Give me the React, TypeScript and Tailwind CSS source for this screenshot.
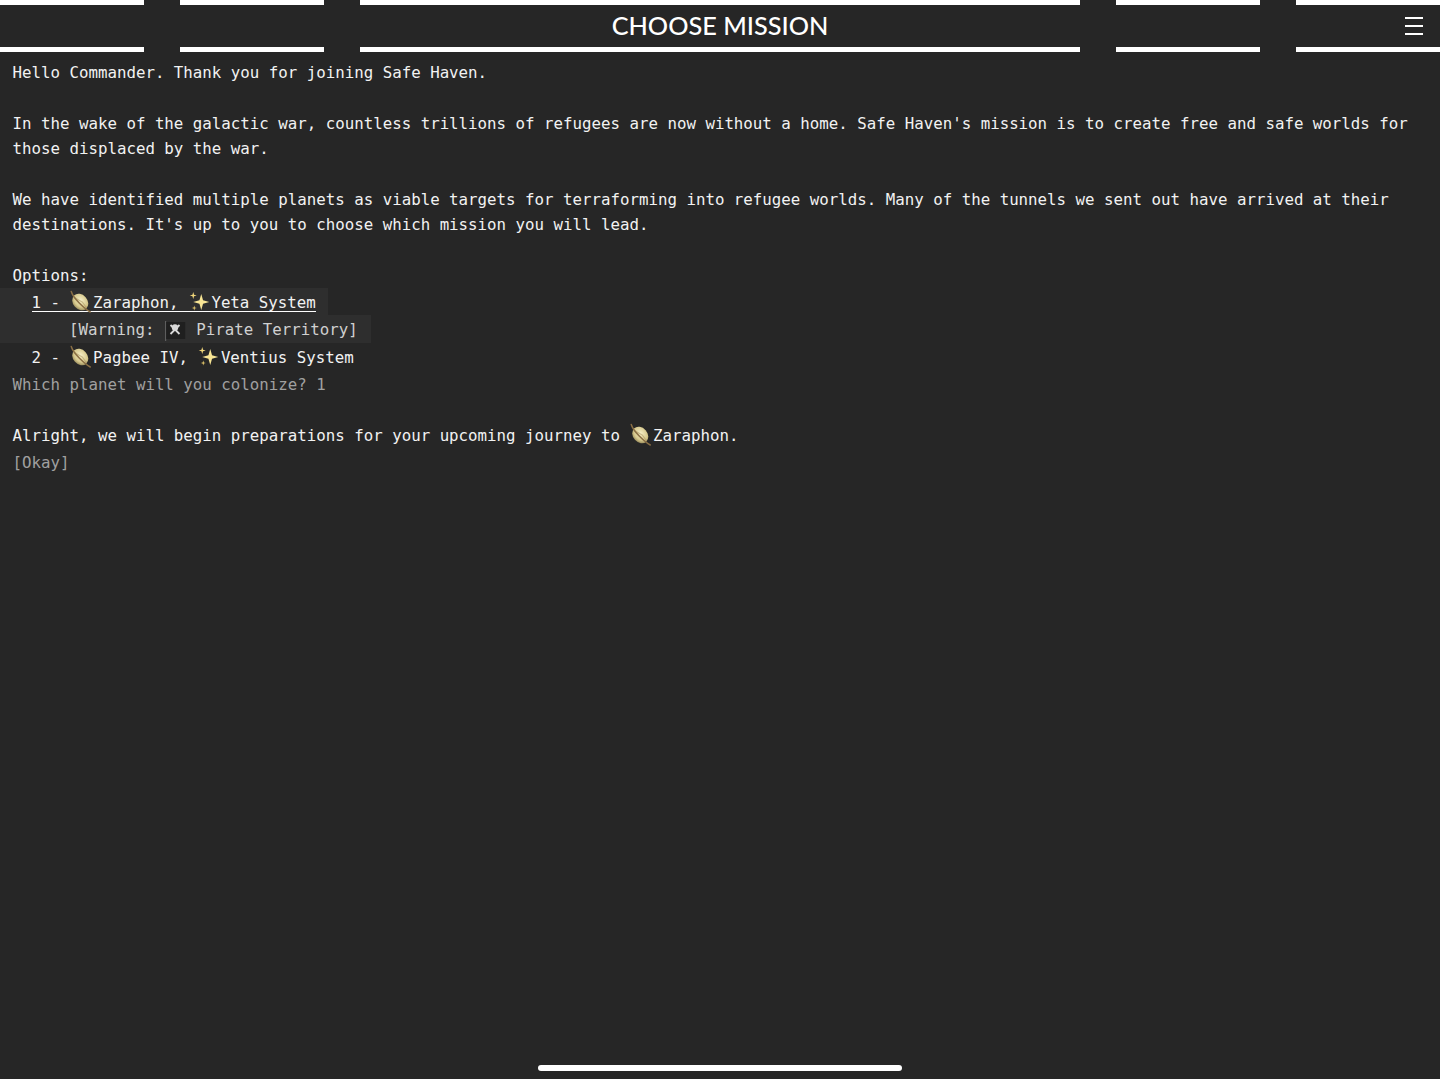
const barCell = "border-y-[5px] border-white h-[52px] flex items-center"

function Planet() {
  return (
    <svg viewBox="0 0 23 26" className="inline-block w-[23.5px] h-[26px] align-[-7px]">
      <defs>
        <radialGradient id="planetBody" cx="0.45" cy="0.4" r="0.7">
          <stop offset="0" stopColor="#f6efc8" />
          <stop offset="0.6" stopColor="#d6c88c" />
          <stop offset="1" stopColor="#7f7248" />
        </radialGradient>
      </defs>
      <ellipse cx="11" cy="13" rx="9" ry="7.2" transform="rotate(48 11 13)" fill="url(#planetBody)" />
      <path d="M5 8.5 L13 13 L17.5 19" stroke="#a8915c" strokeWidth="1.1" fill="none" opacity="0.55" />
      <path d="M2 2.5 C3 6 6 10 10 14 C14 18 17 21 21 23" stroke="#8a6f45" strokeWidth="1.5" fill="none" strokeLinecap="round" />
    </svg>
  )
}

function Sparkles() {
  return (
    <svg viewBox="0 0 23 26" className="inline-block w-[23.5px] h-[26px] align-[-7px]">
      <path d="M13 5 L14.8 11.2 L21 13 L14.8 14.8 L13 21 L11.2 14.8 L5 13 L11.2 11.2 Z" fill="#f8e594" />
      <path d="M5 3 L5.8 5.7 L8.5 6.5 L5.8 7.3 L5 10 L4.2 7.3 L1.5 6.5 L4.2 5.7 Z" fill="#f1d67a" />
      <path d="M6 16.5 L6.6 18.4 L8.5 19 L6.6 19.6 L6 21.5 L5.4 19.6 L3.5 19 L5.4 18.4 Z" fill="#e6c96c" />
    </svg>
  )
}

function PirateFlag() {
  return (
    <svg viewBox="0 0 22 26" className="inline-block w-[23px] h-[26px] align-[-7px]">
      <rect x="0.5" y="5" width="1.2" height="20" fill="#5e5e5e" />
      <rect x="1.7" y="6" width="19" height="17" fill="#1f1f1f" />
      <circle cx="10.5" cy="11.5" r="3.2" fill="#d8d8d8" />
      <path d="M6 9 L15 18 M15 9 L6 18" stroke="#d8d8d8" strokeWidth="1.8" />
    </svg>
  )
}

export default function App() {
  return (
    <div className="relative min-h-screen bg-[#262626] text-[#f2f2f2] font-['DejaVu_Sans_Mono',monospace] text-[15.77px]">
      {/* Header */}
      <header className="flex gap-9 h-[52px]">
        <div className={`${barCell} w-36`} />
        <div className={`${barCell} w-36`} />
        <div className={`${barCell} flex-1 justify-center`}>
          <h1 className="font-['Lato',sans-serif] text-[25.3px] font-medium text-white">CHOOSE MISSION</h1>
        </div>
        <div className={`${barCell} w-36`} />
        <div className={`${barCell} w-36 justify-end pr-[17px]`}>
          <div className="flex flex-col gap-[6px] w-[18px]">
            <span className="h-[2px] bg-white" />
            <span className="h-[2px] bg-white" />
            <span className="h-[2px] bg-white" />
          </div>
        </div>
      </header>

      {/* Terminal */}
      <main className="pt-[8px] whitespace-pre-wrap">
        <div className="pl-[12.5px] pr-3 leading-[25.4px]">
          <p>Hello Commander. Thank you for joining Safe Haven.</p>
          <p className="mt-[25.4px]">
            In the wake of the galactic war, countless trillions of refugees are now without a home. Safe Haven's mission is to create free and safe worlds for those displaced by the war.
          </p>
          <p className="mt-[25.4px]">
            We have identified multiple planets as viable targets for terraforming into refugee worlds. Many of the tunnels we sent out have arrived at their destinations. It's up to you to choose which mission you will lead.
          </p>
          <p className="mt-[25.4px]">Options:</p>
        </div>

        <div className="-mt-[0.6px] leading-[27px]">
          <div className="w-[328px] h-[27px] bg-[#2e2e2e] pl-[31.5px] pt-px">
            <span className="inline-block h-[23px] border-b border-white">{"1 - "}<Planet />{"Zaraphon, "}<Sparkles />Yeta System</span>
          </div>
          <div className="w-[371px] h-[28px] bg-[#2e2e2e] pl-3 pt-px text-[#d0d0d0]">
            {"      [Warning: "}<PirateFlag />{" Pirate Territory]"}
          </div>
          <div className="pl-[12.5px] pt-px">{"  2 - "}<Planet />{"Pagbee IV, "}<Sparkles />Ventius System</div>
          <div className="pl-[12.5px] text-[#a0a0a0]">Which planet will you colonize? 1</div>
        </div>

        <div className="pl-[12.5px] mt-[23.5px] leading-[27.3px]">
          <p>Alright, we will begin preparations for your upcoming journey to <Planet />Zaraphon.</p>
          <p className="text-[#a0a0a0]">[Okay]</p>
        </div>
      </main>

      {/* Home indicator */}
      <div className="absolute bottom-2 left-[538px] w-[364px] h-[6px] rounded-full bg-white" />
    </div>
  )
}
